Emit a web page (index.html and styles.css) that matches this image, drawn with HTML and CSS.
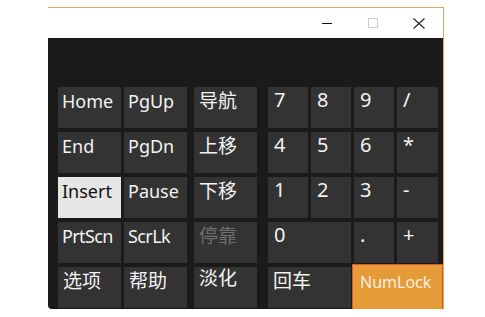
FILE: index.html
```html
<!DOCTYPE html>
<html lang="zh-CN">
<head>
    <meta charset="UTF-8">
    <title>屏幕键盘</title>
    <link rel="stylesheet" href="styles.css">
</head>
<body>

    <div class="window">
        <!-- 标题栏 -->
        <div class="titlebar">
            <span class="tb-btn">
                <svg width="10" height="10" viewBox="0 0 10 10"><path d="M0 5.5h10" stroke="#111" stroke-width="1"/></svg>
            </span>
            <span class="tb-btn">
                <svg width="10" height="10" viewBox="0 0 10 10"><rect x="0.5" y="0.5" width="9" height="9" fill="none" stroke="#cccccc" stroke-width="1"/></svg>
            </span>
            <span class="tb-btn">
                <svg width="12" height="11" viewBox="0 0 12 11"><path d="M0.5 0.5l11 10M11.5 0.5l-11 10" stroke="#222" stroke-width="1.1"/></svg>
            </span>
        </div>

        <!-- 键盘 -->
        <div class="board">
            <div class="col">
                <div class="key">Home</div>
                <div class="key">End</div>
                <div class="key pressed">Insert</div>
                <div class="key narrow">PrtScn</div>
                <div class="key cjk">选项</div>
            </div>
            <div class="col">
                <div class="key">PgUp</div>
                <div class="key">PgDn</div>
                <div class="key">Pause</div>
                <div class="key narrow">ScrLk</div>
                <div class="key cjk">帮助</div>
            </div>
            <div class="col nav">
                <div class="key cjk">导航</div>
                <div class="key cjk">上移</div>
                <div class="key cjk">下移</div>
                <div class="key cjk disabled">停靠</div>
                <div class="key cjk high">淡化</div>
            </div>
            <div class="numpad">
                <div class="key">7</div>
                <div class="key">8</div>
                <div class="key">9</div>
                <div class="key">/</div>
                <div class="key">4</div>
                <div class="key">5</div>
                <div class="key">6</div>
                <div class="key">*</div>
                <div class="key">1</div>
                <div class="key">2</div>
                <div class="key">3</div>
                <div class="key">-</div>
                <div class="key wide">0</div>
                <div class="key">.</div>
                <div class="key">+</div>
                <div class="key wide cjk">回车</div>
                <div class="key wide numlock">NumLock</div>
            </div>
        </div>
    </div>

</body>
</html>
```

FILE: styles.css
```css
body {
    margin: 0;
    background-color: #ffffff;
    font-family: "Noto Sans", "Noto Sans CJK SC", sans-serif;
}

.window {
    width: 395px;
    margin: 7px 0 0 48px;
    border-top: 1px solid #e6a858;
    border-right: 1px solid #e6a858;
}

.titlebar {
    height: 30px;
    background-color: #ffffff;
    display: flex;
    justify-content: flex-end;
    padding-right: 1px;
}

.tb-btn {
    width: 46px;
    display: flex;
    align-items: center;
    justify-content: center;
}

.board {
    height: 222px;
    padding: 49px 0 0 10px;
    background-color: #1b1b1b;
    border-bottom-left-radius: 4px;
    display: flex;
    align-items: flex-start;
    gap: 3px;
}

.col {
    width: 63px;
    display: flex;
    flex-direction: column;
    gap: 4px;
}

.col.nav {
    margin-left: 4px;
}

.numpad {
    margin-left: 8px;
    display: grid;
    grid-template-columns: 40px 40px 40px 41px;
    grid-auto-rows: 41px;
    column-gap: 3px;
    row-gap: 4px;
}

.key {
    height: 41px;
    box-sizing: border-box;
    padding: 3px 0 0 4px;
    background-color: #333333;
    color: #f2f2f2;
    font-size: 18px;
    line-height: 22px;
}

.numpad .key {
    padding: 2px 0 0 6px;
    font-size: 20px;
}

.key.cjk,
.numpad .key.cjk {
    font-size: 19px;
    padding: 3px 0 0 5px;
}

.key.high {
    padding-top: 0;
}

.key.narrow {
    letter-spacing: -0.6px;
}

.key.pressed {
    background-color: #e6e6e6;
    color: #111111;
}

.key.disabled {
    color: #6e6e6e;
}

.key.wide {
    grid-column: span 2;
}

.numpad .key.numlock {
    margin: -3px -5px -2px -2px;
    height: auto;
    padding: 6px 0 0 7px;
    background-color: #e69a38;
    border: 1px solid #d8582c;
    color: #fbf0e0;
    font-size: 16px;
}
```
